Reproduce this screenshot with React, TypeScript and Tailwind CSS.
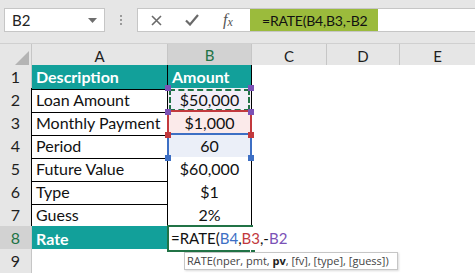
const cols = 'grid grid-cols-[32px_136px_84px_75px_73px_75px]'

const rows: [string, string][] = [
  ['Loan Amount', '$50,000'],
  ['Monthly Payment', '$1,000'],
  ['Period', '60'],
  ['Future Value', '$60,000'],
  ['Type', '$1'],
  ['Guess', '2%'],
]

function Handle({ pos, color }: { pos: string; color: string }) {
  return <div className={`absolute w-[6px] h-[6px] z-20 ${pos} ${color}`} />
}

function RowHead({ n, dark, active }: { n: number; dark?: boolean; active?: boolean }) {
  return (
    <div
      className={`flex items-center justify-center border-b border-[#c6c6c6] ${
        dark ? 'border-r border-r-black' : 'border-r'
      } ${active ? 'bg-[#d2d2d2] text-[#217346]' : 'bg-[#e6e6e6] text-[#1e1e1e]'}`}
    >
      {n}
    </div>
  )
}

function Empty() {
  return <div className="bg-white" />
}

function BCell({ i, value }: { i: number; value: string }) {
  // B2..B4 are highlighted as formula references
  const fill = i === 0 ? 'bg-[#f3eff8]' : i === 1 ? 'bg-[#fbeaea]' : i === 2 ? 'bg-[#ebeff8]' : 'bg-white'
  return (
    <div className={`relative flex items-center justify-center border-r border-b border-black ${fill}`}>
      {value}
      {i === 0 && (
        <>
          <div className="absolute inset-[1px] border-2 border-dashed border-[#217346]" />
          <Handle pos="-left-[3px] -top-[3px]" color="bg-[#7b52b6]" />
          <Handle pos="-right-[3px] -top-[3px]" color="bg-[#7b52b6]" />
          <Handle pos="-left-[3px] -bottom-[3px]" color="bg-[#7b52b6]" />
          <Handle pos="-right-[3px] -bottom-[3px]" color="bg-[#7b52b6]" />
        </>
      )}
      {i === 1 && (
        <>
          <div className="absolute -left-[1px] -top-[1px] -right-[1px] -bottom-[1px] border-2 border-[#c2393d]" />
          <Handle pos="-left-[3px] -bottom-[3px]" color="bg-[#c2393d]" />
          <Handle pos="-right-[3px] -bottom-[3px]" color="bg-[#c2393d]" />
        </>
      )}
      {i === 2 && (
        <>
          <div className="absolute -left-[1px] -top-[1px] -right-[1px] -bottom-[1px] border-2 border-[#3d6fc4]" />
          <Handle pos="-left-[3px] -bottom-[3px]" color="bg-[#3d6fc4]" />
          <Handle pos="-right-[3px] -bottom-[3px]" color="bg-[#3d6fc4]" />
        </>
      )}
    </div>
  )
}

export default function App() {
  return (
    <div className="w-[475px] h-[273px] overflow-hidden bg-white font-['Lato','Liberation_Sans',sans-serif] text-[16px] text-[#111]">
      {/* formula bar */}
      <div className="h-[43px] bg-[#e6e6e6] flex items-start pt-[8px] pl-[4px]">
        <div className="w-[101px] h-[24px] bg-white border border-[#c6c6c6] flex items-center justify-between pl-[7px] pr-[7px]">
          <span className="text-[15px] text-[#222]">B2</span>
          <svg width="9" height="5" viewBox="0 0 9 5">
            <path d="M0 0h9L4.5 5z" fill="#6e6e6e" />
          </svg>
        </div>
        <div className="w-[32px] h-[24px] flex flex-col items-center justify-center gap-[2px]">
          <div className="w-[2px] h-[2px] bg-[#9a9a9a]" />
          <div className="w-[2px] h-[2px] bg-[#9a9a9a]" />
          <div className="w-[2px] h-[2px] bg-[#9a9a9a]" />
        </div>
        <div className="flex-1 min-w-0 h-[24px] bg-white border border-r-0 border-[#c6c6c6] flex items-stretch">
          <div className="w-[36px] shrink-0 flex items-center justify-center">
            <svg width="11" height="11" viewBox="0 0 11 11">
              <path d="M1 1l9 9M10 1l-9 9" stroke="#6a6a6a" strokeWidth="1.6" />
            </svg>
          </div>
          <div className="w-[36px] shrink-0 flex items-center justify-center">
            <svg width="14" height="12" viewBox="0 0 14 12">
              <path d="M1 6.5l4 4 8-9.5" stroke="#6a6a6a" strokeWidth="2.2" fill="none" />
            </svg>
          </div>
          <div className="w-[36px] shrink-0 flex items-center justify-center font-['Liberation_Serif',serif] italic text-[#555] text-[16px]">
            <span>f</span>
            <span className="text-[12px] mt-[3px]">x</span>
          </div>
          <div className="ml-[4px] w-[128px] shrink-0 bg-[#9bbb3c] flex items-center pl-[12px] text-[14px] tracking-[-0.2px] text-[#111] whitespace-nowrap">
            =RATE(B4,B3,-B2
          </div>
        </div>
      </div>

      {/* sheet */}
      <div className="relative">
        {/* column headers */}
        <div className={`${cols} h-[22px] border-t border-[#d0d0d0] text-[#1e1e1e] text-[15px]`}>
          <div className="bg-[#e6e6e6] border-r border-b border-[#c6c6c6] flex items-end justify-end p-[2px]">
            <svg width="15" height="15" viewBox="0 0 15 15">
              <path d="M15 0V15H0z" fill="#b4b4b4" />
            </svg>
          </div>
          <div className="bg-[#e6e6e6] border-r border-b border-[#c6c6c6] flex items-center justify-center">A</div>
          <div className="bg-[#d2d2d2] border-r border-[#c6c6c6] border-b-2 border-b-[#217346] flex items-center justify-center text-[#217346]">
            B
          </div>
          <div className="bg-[#e6e6e6] border-r border-b border-[#c6c6c6] flex items-center justify-center">C</div>
          <div className="bg-[#e6e6e6] border-r border-b border-[#c6c6c6] flex items-center justify-center">D</div>
          <div className="bg-[#e6e6e6] border-b border-[#c6c6c6] flex items-center justify-center">E</div>
        </div>

        {/* row 1 */}
        <div className={`${cols} h-[23px]`}>
          <RowHead n={1} />
          <div className="bg-[#12a09a] border-r border-b border-black flex items-center pl-[4px] font-bold text-white">
            Description
          </div>
          <div className="bg-[#12a09a] border-r border-b border-black flex items-center pl-[4px] font-bold text-white">
            Amount
          </div>
          <Empty />
          <Empty />
          <Empty />
        </div>

        {rows.map(([label, value], i) => (
          <div key={label} className={`${cols} h-[23px]`}>
            <RowHead n={i + 2} dark />
            <div className="border-r border-b border-black flex items-center pl-[4px]">{label}</div>
            <BCell i={i} value={value} />
            <Empty />
            <Empty />
            <Empty />
          </div>
        ))}

        {/* row 8 */}
        <div className={`${cols} h-[23px]`}>
          <RowHead n={8} active />
          <div className="bg-[#12a09a] flex items-center pl-[4px] font-bold text-white">Rate</div>
          <div className="relative bg-white z-10">
            <div className="absolute -left-[1px] -top-[1px] w-[86px] -bottom-[1px] border-2 border-r-0 border-[#217346]" />
            <div className="absolute right-[-4px] bottom-[-4px] w-[6px] h-[6px] bg-[#217346] border border-white" />
            <div className="relative h-full flex items-center pl-[3px] whitespace-nowrap text-[15px]">
              <span>
                =RATE(<span className="text-[#3d6fc4]">B4</span>,<span className="text-[#c2393d]">B3</span>,-
                <span className="text-[#7b52b6]">B2</span>
              </span>
            </div>
          </div>
          <Empty />
          <Empty />
          <Empty />
        </div>

        {/* row 9 */}
        <div className={`${cols} h-[23px]`}>
          <RowHead n={9} />
          <Empty />
          <Empty />
          <Empty />
          <Empty />
          <Empty />
        </div>

        {/* function tooltip */}
        <div className="absolute left-[184px] top-[209px] w-[214px] h-[18px] z-30 bg-white border border-[#c6c6c6] shadow-[1px_1px_2px_rgba(0,0,0,0.15)] flex items-center pl-[2px] font-['Open_Sans','Liberation_Sans',sans-serif] text-[11px] text-[#444] whitespace-nowrap">
          <span>
            RATE(nper, pmt, <b className="font-bold text-[#222]">pv</b>, [fv], [type], [guess])
          </span>
        </div>
      </div>
    </div>
  )
}
